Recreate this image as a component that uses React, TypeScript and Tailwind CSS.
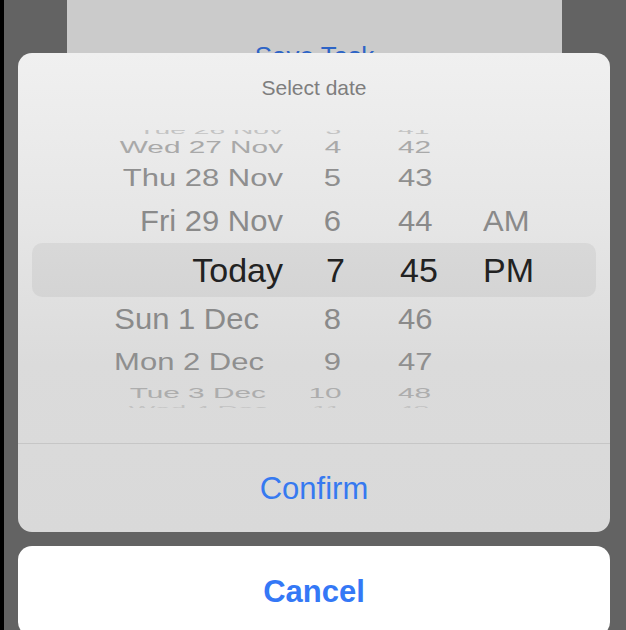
const rows = [
  { date: 'Tue 26 Nov', hour: '3', min: '41', ampm: '', height: 'h-[9px]', squash: 'scale-x-[0.91] scale-y-[0.34]', color: 'text-[#c3c3c3]', pad: '' },
  { date: 'Wed 27 Nov', hour: '4', min: '42', ampm: '', height: 'h-[25px]', squash: 'scale-x-[0.96] scale-y-[0.53]', color: 'text-[#a9a9a9]', pad: '' },
  { date: 'Thu 28 Nov', hour: '5', min: '43', ampm: '', height: 'h-[37px]', squash: 'scale-y-[0.76]', color: 'text-[#8f8f8f]', pad: '' },
  { date: 'Fri 29 Nov', hour: '6', min: '44', ampm: 'AM', height: 'h-[48px]', squash: 'scale-y-[0.94]', color: 'text-[#8a8a8a]', pad: '' },
  { date: 'Today', hour: '7', min: '45', ampm: 'PM', height: 'h-[50px]', squash: '', color: 'text-[#222222]', pad: '', selected: true },
  { date: 'Sun 1 Dec', hour: '8', min: '46', ampm: '', height: 'h-[48px]', squash: 'scale-y-[0.94]', color: 'text-[#8a8a8a]', pad: 'pr-[24px]' },
  { date: 'Mon 2 Dec', hour: '9', min: '47', ampm: '', height: 'h-[39px]', squash: 'scale-y-[0.76]', color: 'text-[#8f8f8f]', pad: 'pr-[19px]' },
  { date: 'Tue 3 Dec', hour: '10', min: '48', ampm: '', height: 'h-[21px]', squash: 'scale-x-[0.96] scale-y-[0.5]', color: 'text-[#adadad]', pad: 'pr-[17px]' },
  { date: 'Wed 4 Dec', hour: '11', min: '49', ampm: '', height: 'h-[11px]', squash: 'scale-x-[0.91] scale-y-[0.3]', color: 'text-[#c3c3c3]', pad: 'pr-[15px]' },
];

function WheelRow({ row }: { row: (typeof rows)[number] }) {
  const size = row.selected ? 'text-[34px]' : 'text-[31px]';
  return (
    <div className={`flex items-center ${row.height} ${row.color} ${size}`}>
      <div className={`flex w-[265px] flex-none justify-end ${row.pad}`}>
        <span className={`block origin-right leading-none whitespace-nowrap ${row.squash}`}>{row.date}</span>
      </div>
      <div className="flex w-[58px] flex-none justify-end">
        <span className={`block origin-right leading-none ${row.squash} ${row.selected ? 'translate-x-[4px]' : ''}`}>
          {row.hour}
        </span>
      </div>
      <div className="flex w-[142px] flex-none pl-[57px]">
        <span className={`block origin-left leading-none ${row.squash} ${row.selected ? 'translate-x-[2px]' : ''}`}>
          {row.min}
        </span>
      </div>
      <div className="flex flex-1">
        <span className={`block origin-left leading-none ${row.squash}`}>{row.ampm}</span>
      </div>
    </div>
  );
}

export default function App() {
  return (
    <div className="h-[630px] w-[626px] overflow-hidden border-l-4 border-black bg-[#636363] font-['Liberation_Sans',Arial,sans-serif]">
      {/* dimmed sheet behind */}
      <div className="ml-[63px] h-[80px] w-[495px] bg-[#cbcbcb] pt-[43px] text-center text-[26px] leading-none text-[#2d64c6]">
        Save Task
      </div>

      {/* date picker sheet */}
      <div className="relative -mt-[27px] ml-[14px] w-[592px] overflow-hidden rounded-[14px] bg-[linear-gradient(to_bottom,#f0f0f0_0%,#e6e6e6_35%,#dbdbdb_65%,#d9d9d9_100%)]">
        <div className="flex h-[70px] items-center justify-center text-[21px] text-[#7e7e7e]">Select date</div>

        <div className="relative mt-[7px] h-[278px] overflow-hidden">
          <div className="absolute top-[113px] right-[14px] left-[14px] h-[54px] rounded-[10px] bg-black/[0.05]" />
          <div className="relative -mt-[4px]">
            {rows.map((row) => (
              <WheelRow key={row.date} row={row} />
            ))}
          </div>
        </div>

        <div className="h-[35px]" />
        <div className="h-px bg-[#c6c6c6]" />
        <button className="flex h-[88px] w-full items-center justify-center pt-[2px] text-[31px] text-[#3679f0]">
          Confirm
        </button>
      </div>

      <button className="relative mt-[14px] ml-[14px] flex h-[90px] w-[592px] items-center justify-center rounded-[14px] bg-white pt-[2px] text-[31px] font-bold text-[#3478f6]">
        Cancel
      </button>
    </div>
  );
}
